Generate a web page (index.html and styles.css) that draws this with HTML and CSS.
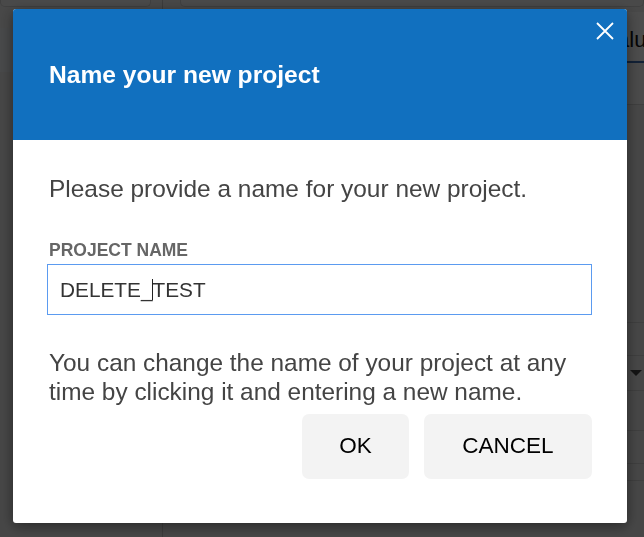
FILE: index.html
```html
<!DOCTYPE html>
<html lang="en">
<head>
<meta charset="utf-8">
<title>Name your new project</title>
<link rel="stylesheet" href="styles.css">
</head>
<body>
<div class="app">
  <aside class="sidebar">
    <div class="side-top"><div class="side-search"></div></div>
    <div class="side-band"></div>
  </aside>
  <main class="main">
    <div class="toolbar"><div class="search"></div></div>
    <div class="table">
      <div class="thead">
        <div class="th"></div>
        <div class="th th-value">Value</div>
      </div>
      <div class="row row-band"></div>
      <div class="row row-tall"></div>
      <div class="row row-short"></div>
      <div class="row"><span class="caret-down"></span></div>
      <div class="row row-mid"></div>
      <div class="row row-short"></div>
      <div class="row row-tiny"></div>
    </div>
  </main>
</div>

<div class="overlay">
  <div class="dialog" role="dialog" aria-labelledby="dlg-title">
    <header class="dlg-head">
      <h1 id="dlg-title" class="dlg-title">Name your new project</h1>
      <button class="dlg-close" aria-label="Close">
        <svg width="18" height="18" viewBox="0 0 18 18" aria-hidden="true">
          <path d="M1 1 L17 17 M17 1 L1 17" stroke="#ffffff" stroke-width="1.8" fill="none"/>
        </svg>
      </button>
    </header>
    <div class="dlg-body">
      <p class="lead">Please provide a name for your new project.</p>
      <label class="field-label">PROJECT NAME</label>
      <div class="field" role="textbox">DELETE_<span class="text-caret"></span>TEST</div>
      <p class="note">You can change the name of your project at any time by clicking it and entering a new name.</p>
      <div class="actions">
        <button class="btn">OK</button>
        <button class="btn">CANCEL</button>
      </div>
    </div>
  </div>
</div>
</body>
</html>
```

FILE: styles.css
```css
* { box-sizing: border-box; }

html, body {
  margin: 0;
  padding: 0;
  width: 644px;
  height: 537px;
  overflow: hidden;
  font-family: "Liberation Sans", Arial, sans-serif;
}

/* ---------- background application ---------- */
.app {
  display: grid;
  grid-template-columns: 163px 1fr;
  height: 537px;
  background: #ececec;
}

.sidebar {
  border-right: 1px solid #c8c8c8;
  display: flex;
  flex-direction: column;
}

.side-top {
  height: 28px;
  padding: 0 11px 0 0;
  background: #f2f2f2;
}

.side-search {
  height: 7px;
  border: 1px solid #d6d6d6;
  border-top: none;
  border-radius: 0 0 5px 5px;
  background: #f6f6f6;
}

.side-band {
  height: 44px;
  background: #f0f3f8;
}

.main {
  display: flex;
  flex-direction: column;
}

.toolbar {
  height: 12px;
  padding: 0 0 0 17px;
  background: #f2f2f2;
}

.search {
  height: 7px;
  border: 1px solid #d6d6d6;
  border-top: none;
  border-radius: 0 0 5px 5px;
  background: #f6f6f6;
}

.table {
  display: flex;
  flex-direction: column;
}

.thead {
  display: grid;
  grid-template-columns: 1fr 40px;
  height: 51px;
  border-bottom: 2px solid #3d6fb4;
  background: #ffffff;
}

.th-value {
  padding: 15px 0 0 0;
  font-size: 22px;
  color: #111111;
  white-space: nowrap;
  overflow: hidden;
}

.row {
  height: 35px;
  border-bottom: 1px solid #d2d2d2;
  display: flex;
  justify-content: flex-end;
  align-items: center;
}

.row-band { height: 42px; background: #f7f7f7; }
.row-tall { height: 218px; }
.row-short { height: 33px; }
.row-mid { height: 40px; }
.row-tiny { height: 17px; }

.caret-down {
  width: 0;
  height: 0;
  border-left: 6px solid transparent;
  border-right: 6px solid transparent;
  border-top: 6px solid #444;
  margin-right: 2px;
}

/* ---------- modal overlay ---------- */
.overlay {
  position: fixed;
  inset: 0;
  background: rgba(0, 0, 0, 0.7);
  padding: 9px 0 0 13px;
}

.dialog {
  position: relative;
  width: 614px;
  height: 514px;
  background: #ffffff;
  border-radius: 3px;
  overflow: hidden;
  box-shadow: 0 3px 14px rgba(0, 0, 0, 0.45);
  display: flex;
  flex-direction: column;
}

.dlg-head {
  height: 131px;
  flex: none;
  background: #1170bf;
  display: flex;
  align-items: center;
  padding: 0 0 0 36px;
}

.dlg-title {
  margin: 0;
  font-size: 24.6px;
  font-weight: 700;
  color: #ffffff;
}

.dlg-close {
  position: absolute;
  top: 13px;
  right: 13px;
  width: 18px;
  height: 18px;
  padding: 0;
  border: 0;
  background: transparent;
  display: block;
}

.dlg-close svg { display: block; }

.dlg-body {
  padding: 34px 35px 0 36px;
  display: flex;
  flex-direction: column;
}

.lead {
  margin: 0;
  font-size: 24.45px;
  line-height: 29px;
  color: #444444;
}

.field-label {
  margin: 37px 0 0 0;
  font-size: 17.5px;
  line-height: 20px;
  font-weight: 700;
  color: #666666;
}

.field {
  margin: 4px 0 0 -2px;
  height: 51px;
  border: 1px solid #5b9bf0;
  padding: 0 0 0 12px;
  font-size: 20.8px;
  color: #333333;
  display: flex;
  align-items: center;
  white-space: pre;
}

.text-caret {
  display: inline-block;
  width: 1px;
  height: 21px;
  background: #222222;
  margin: 0 -1px 0 0;
}

.note {
  margin: 34px 0 0 0;
  font-size: 24.4px;
  line-height: 28.8px;
  color: #444444;
}

.actions {
  margin: 7px 0 0 0;
  display: flex;
  justify-content: flex-end;
  gap: 15px;
}

.btn {
  height: 65px;
  padding: 0 37px;
  border: 0;
  border-radius: 7px;
  background: #f3f3f3;
  font-family: "Liberation Sans", Arial, sans-serif;
  font-size: 22.5px;
  color: #000000;
}

.btn:last-child {
  padding: 0 38.5px;
}
```
